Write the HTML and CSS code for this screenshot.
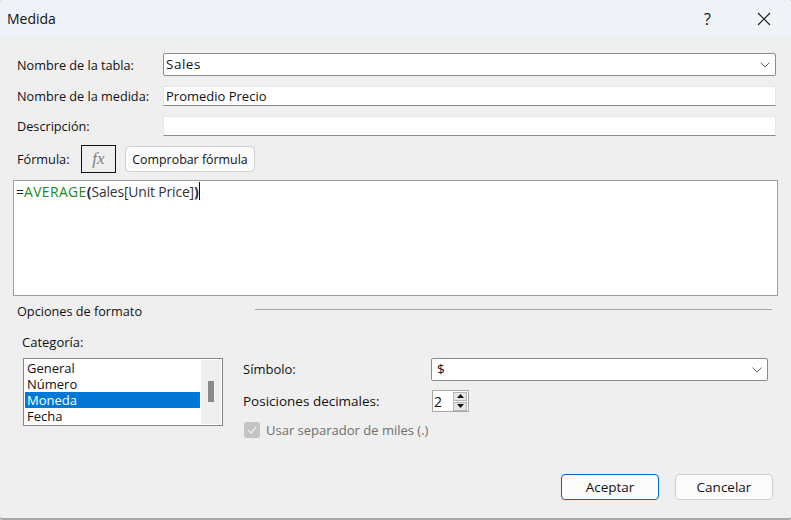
FILE: index.html
```html
<!DOCTYPE html>
<html lang="es">
<head>
    <meta charset="UTF-8">
    <meta name="viewport" content="width=device-width, initial-scale=1.0">
    <title>Medida</title>
    <link rel="stylesheet" href="styles.css">
</head>
<body>
    <div class="dialog">

        <!-- Title bar -->
        <div class="titlebar">
            <span class="title">Medida</span>
            <span class="help">?</span>
            <svg class="close" width="14" height="14" viewBox="0 0 14 14">
                <path d="M1 1L13 13M13 1L1 13" stroke="#1a1a1a" stroke-width="1.1" fill="none"/>
            </svg>
        </div>

        <!-- Name fields -->
        <div class="fields">
            <div class="row row-table">
                <label class="row-label">Nombre de la tabla:</label>
                <div class="combo combo-table">
                    <span class="combo-text">Sales</span>
                    <svg class="chevron" width="10" height="6" viewBox="0 0 10 6">
                        <path d="M0.5 0.5L5 5L9.5 0.5" stroke="#666" stroke-width="1" fill="none"/>
                    </svg>
                </div>
            </div>
            <div class="row row-name">
                <label class="row-label">Nombre de la medida:</label>
                <div class="textbox">Promedio Precio</div>
            </div>
            <div class="row row-desc">
                <label class="row-label">Descripción:</label>
                <div class="textbox"></div>
            </div>
        </div>

        <!-- Formula -->
        <div class="formula-bar">
            <span class="formula-label">Fórmula:</span>
            <div class="fx-button">fx</div>
            <button class="btn btn-check">Comprobar fórmula</button>
        </div>
        <div class="editor"><span class="op">=</span><span class="fn">AVERAGE</span><b class="paren">(</b><span class="ref">Sales[Unit Price]</span><b class="paren">)</b><span class="caret"></span></div>

        <!-- Format options -->
        <div class="section-head">
            <span class="section-title">Opciones de formato</span>
            <div class="section-line"></div>
        </div>
        <div class="category-label">Categoría:</div>

        <div class="format">
            <div class="listbox">
                <ul class="list">
                    <li>General</li>
                    <li>Número</li>
                    <li class="selected">Moneda</li>
                    <li>Fecha</li>
                </ul>
                <div class="scrollbar"><div class="thumb"></div></div>
            </div>
            <div class="format-options">
                <div class="option-row option-symbol">
                    <label class="option-label">Símbolo:</label>
                    <div class="combo combo-symbol">
                        <span class="combo-text">$</span>
                        <svg class="chevron" width="10" height="6" viewBox="0 0 10 6">
                            <path d="M0.5 0.5L5 5L9.5 0.5" stroke="#666" stroke-width="1" fill="none"/>
                        </svg>
                    </div>
                </div>
                <div class="option-row option-decimals">
                    <label class="decimals-label">Posiciones decimales:</label>
                    <div class="spinner">
                        <span class="spinner-value">2</span>
                        <div class="spinner-buttons">
                            <div class="spin-btn"><svg width="7" height="4" viewBox="0 0 7 4"><path d="M3.5 0L7 4H0Z" fill="#111"/></svg></div>
                            <div class="spin-btn"><svg width="7" height="4" viewBox="0 0 7 4"><path d="M0 0H7L3.5 4Z" fill="#111"/></svg></div>
                        </div>
                    </div>
                </div>
                <div class="check-row">
                    <div class="checkbox">
                        <svg width="12" height="10" viewBox="0 0 12 10"><path d="M2 5L5 8L10 2" stroke="#efefef" stroke-width="1.2" fill="none"/></svg>
                    </div>
                    <span>Usar separador de miles (.)</span>
                </div>
            </div>
        </div>

        <!-- Dialog buttons -->
        <div class="actions">
            <button class="btn btn-action btn-primary">Aceptar</button>
            <button class="btn btn-action">Cancelar</button>
        </div>
    </div>
</body>
</html>
```

FILE: styles.css
```css
* {
    box-sizing: border-box;
}
html, body {
    margin: 0;
    height: 100%;
}
body {
    font-family: "Open Sans", "Noto Sans", sans-serif;
    font-size: 13px;
    color: #111;
    background-color: #d0d3d6;
    overflow: hidden;
}
.dialog {
    width: 791px;
    height: 520px;
    background-color: #efefef;
    border-bottom: 2px solid #a8a8a8;
    border-radius: 3px;
    overflow: hidden;
}
.titlebar {
    height: 37px;
    background-color: #eff3f8;
    display: flex;
    align-items: center;
    padding-left: 7px;
}
.title {
    font-size: 14px;
    flex: 1;
}
.help {
    font-size: 16px;
    margin-right: 46px;
}
.close {
    margin-right: 20px;
}
.fields {
    padding: 16px 15px 0 17px;
}
.row {
    display: flex;
    align-items: center;
}
.row-label {
    width: 146px;
    flex-shrink: 0;
    font-size: 12.7px;
}
.row-table {
    height: 23px;
}
.row-name {
    height: 20px;
    margin-top: 10px;
}
.row-desc {
    height: 20px;
    margin-top: 10px;
}
.combo {
    background: white;
    border: 1px solid #8b8b8b;
    border-radius: 2px;
    display: flex;
    align-items: center;
    justify-content: space-between;
    padding: 0 5px 0 2px;
    height: 23px;
    font-size: 13.5px;
}
.combo-text {
    margin-top: -2px;
    letter-spacing: 0.5px;
}
.combo-table {
    flex: 1;
}
.textbox {
    flex: 1;
    height: 20px;
    background: white;
    border: 1px solid #e6e6e6;
    border-bottom: 1px solid #8b8b8b;
    padding-left: 2px;
    line-height: 18px;
    font-size: 13px;
}
.formula-bar {
    display: flex;
    align-items: center;
    height: 28px;
    margin-top: 9px;
    padding-left: 17px;
}
.formula-label {
    width: 64px;
    font-size: 12.7px;
}
.fx-button {
    width: 35px;
    height: 28px;
    border: 1px solid #111;
    font-family: "Liberation Serif", serif;
    font-style: italic;
    font-size: 17px;
    color: #808080;
    text-align: center;
    line-height: 25px;
}
.btn {
    font-family: inherit;
    font-size: 12.4px;
    color: #111;
    background: #fbfbfb;
    border: 1px solid #d0d0d0;
    border-radius: 4px;
    padding: 0;
}
.btn-check {
    width: 130px;
    height: 26px;
    margin-left: 9px;
}
.editor {
    height: 116px;
    margin: 7px 13px 0;
    background: white;
    border: 1px solid #a0a0a0;
    padding: 1px 2px;
    font-size: 13.9px;
    line-height: 19px;
    display: flex;
    align-items: flex-start;
}
.op {
    color: #222;
}
.fn {
    color: #1c8a1c;
    letter-spacing: 0.4px;
}
.paren {
    color: #1a2a4a;
}
.ref {
    color: #333;
    letter-spacing: -0.15px;
}
.caret {
    width: 1px;
    height: 18px;
    background: #111;
}
.section-head {
    display: flex;
    align-items: center;
    height: 16px;
    margin-top: 7px;
    padding: 0 19px 0 17px;
}
.section-title {
    width: 238px;
    font-size: 12.7px;
}
.section-line {
    flex: 1;
    height: 1px;
    background: #a8a8a8;
    margin-top: -3px;
}
.category-label {
    margin: 15px 0 0 22px;
    height: 16px;
    line-height: 16px;
}
.format {
    display: flex;
    margin-top: 8px;
    padding-left: 23px;
}
.listbox {
    width: 200px;
    height: 68px;
    background: white;
    border: 1px solid #82878f;
    display: flex;
    padding: 1px;
}
.list {
    list-style: none;
    margin: 0;
    padding: 0;
    flex: 1;
}
.list li {
    height: 16px;
    line-height: 17px;
    padding-left: 2px;
}
.list .selected {
    background: #0078d7;
    color: white;
}
.scrollbar {
    width: 20px;
    margin-left: 1px;
    background: #efefef;
    padding: 21px 0 0 7px;
}
.thumb {
    width: 6px;
    height: 21px;
    background: #8a8a8a;
}
.format-options {
    margin-left: 20px;
    flex: 1;
}
.option-row {
    display: flex;
    align-items: center;
}
.option-symbol {
    height: 23px;
}
.option-label {
    width: 188px;
    margin-top: -2px;
}
.combo-symbol {
    width: 337px;
    padding-left: 5px;
}
.option-decimals {
    margin-top: 9px;
    height: 22px;
}
.decimals-label {
    width: 189px;
    font-size: 13.5px;
}
.spinner {
    width: 37px;
    height: 22px;
    background: white;
    border: 1px solid #a8a8a8;
    display: flex;
    align-items: center;
    justify-content: space-between;
    padding: 0 1px;
    font-size: 14px;
}
.spinner-buttons {
    display: flex;
    flex-direction: column;
    gap: 1px;
}
.spin-btn {
    width: 14px;
    height: 9px;
    background: #e6e6e6;
    border: 1px solid #b4b4b4;
    display: flex;
    align-items: center;
    justify-content: center;
}
.check-row {
    display: flex;
    align-items: center;
    margin-top: 10px;
    margin-left: 1px;
    color: #6e6e6e;
    height: 16px;
}
.checkbox {
    width: 16px;
    height: 16px;
    border-radius: 3px;
    background: #c4c4c4;
    margin-right: 6px;
    display: flex;
    align-items: center;
    justify-content: center;
}
.actions {
    display: flex;
    justify-content: flex-end;
    gap: 16px;
    margin-top: 36px;
    padding-right: 18px;
}
.btn-action {
    width: 98px;
    height: 26px;
    font-size: 13.5px;
}
.btn-primary {
    border: 1px solid #0067c0;
}
```
